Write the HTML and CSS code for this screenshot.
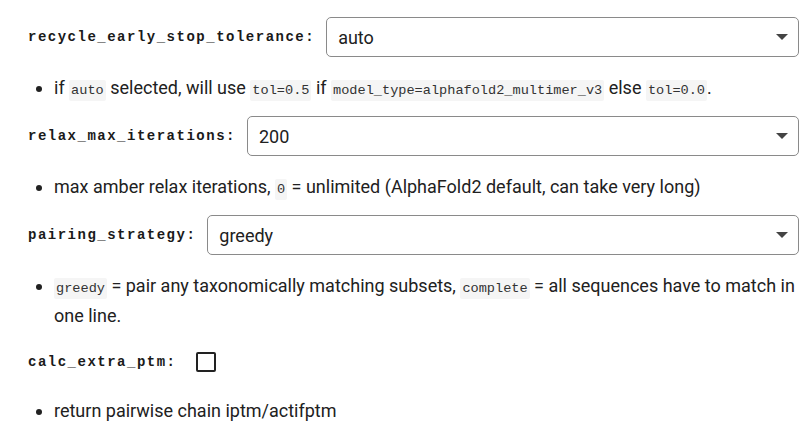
FILE: index.html
```html
<!DOCTYPE html>
<html>
<head>
<meta charset="utf-8">
<link rel="stylesheet" href="styles.css">
</head>
<body>
<div class="form">
  <div class="row">
    <label class="label">recycle_early_stop_tolerance:</label>
    <div class="select"><span class="value">auto</span><span class="arrow"></span></div>
  </div>
  <ul class="desc">
    <li>if <code>auto</code> selected, will use <code>tol=0.5</code> if <code>model_type=alphafold2_multimer_v3</code> else <code>tol=0.0</code>.</li>
  </ul>

  <div class="row">
    <label class="label">relax_max_iterations:</label>
    <div class="select"><span class="value">200</span><span class="arrow"></span></div>
  </div>
  <ul class="desc">
    <li>max amber relax iterations, <code>0</code> = unlimited (AlphaFold2 default, can take very long)</li>
  </ul>

  <div class="row">
    <label class="label">pairing_strategy:</label>
    <div class="select"><span class="value">greedy</span><span class="arrow"></span></div>
  </div>
  <ul class="desc">
    <li><code>greedy</code> <span>= pair any taxonomically matching subsets,</span> <code>complete</code> <span>= all sequences have to match in</span> <span>one line.</span></li>
  </ul>

  <div class="row row-check">
    <label class="label">calc_extra_ptm:</label>
    <span class="checkbox"></span>
  </div>
  <ul class="desc">
    <li>return pairwise chain iptm/actifptm</li>
  </ul>
</div>
</body>
</html>
```

FILE: styles.css
```css
html, body {
  margin: 0;
  padding: 0;
  background: #ffffff;
}

body {
  font-family: Roboto, "Noto Sans", sans-serif;
  color: #212121;
  font-size: 18px;
}

.form {
  padding: 17px 7px 0 28px;
}

.row {
  display: flex;
  align-items: center;
  height: 40px;
  gap: 11px;
}

.label {
  font-family: "Liberation Mono", "DejaVu Sans Mono", monospace;
  font-weight: bold;
  font-size: 14px;
  letter-spacing: 1.5px;
  color: #1a1a1a;
  white-space: nowrap;
}

.select {
  flex: 1;
  height: 40px;
  box-sizing: border-box;
  border: 1px solid #8a8a8a;
  border-radius: 5px;
  display: flex;
  align-items: center;
  justify-content: space-between;
  padding: 0 10px 0 11px;
}

.value {
  font-size: 18px;
  color: #212121;
}

.arrow {
  width: 0;
  height: 0;
  border-left: 6px solid transparent;
  border-right: 6px solid transparent;
  border-top: 6px solid #444;
}

.row-check {
  gap: 19px;
  height: 36px;
}

.checkbox {
  width: 16px;
  height: 16px;
  border: 2px solid #222;
  border-radius: 2px;
}

.desc {
  margin: 16px 0 13px 0;
  padding-left: 26px;
  line-height: 30px;
}

code {
  font-family: "Liberation Mono", "DejaVu Sans Mono", monospace;
  font-size: 13.6px;
  line-height: 1;
  background: #f5f5f5;
  color: #333;
  padding: 3px 2px;
  border-radius: 2px;
}
```
